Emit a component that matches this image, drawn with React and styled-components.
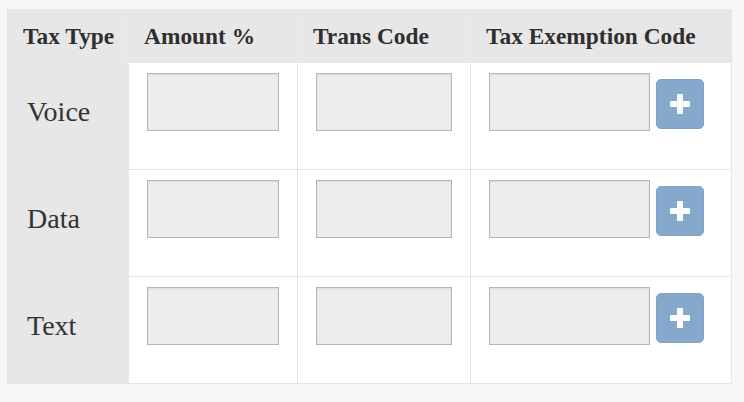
import React from "react";
import styled, { createGlobalStyle } from "styled-components";

const GlobalStyle = createGlobalStyle`
  body {
    margin: 0;
    background: #f7f7f7;
    font-family: "Liberation Serif", "Times New Roman", serif;
    color: #333;
  }
`;

const rows = ["Voice", "Data", "Text"];
const headers = ["Tax Type", "Amount %", "Trans Code", "Tax Exemption Code"];

const Page = styled.div`
  padding: 9px 0 0 7px;
`;

const Sheet = styled.div`
  display: grid;
  grid-template-columns: 121px 169px 173px 262px;
  width: 725px;
`;

const HeadCell = styled.div`
  box-sizing: border-box;
  height: 54px;
  display: flex;
  align-items: center;
  padding: 0 0 0 16px;
  background: #e7e7e7;
  border-right: 1px solid ${(p) => (p.$last ? "#e5e5e5" : "#ebebeb")};
  font-weight: bold;
  font-size: 23.4px;
  color: #2f2f2f;
  white-space: nowrap;
`;

const LabelCell = styled.div`
  box-sizing: border-box;
  height: 107px;
  display: flex;
  align-items: center;
  padding: 0 0 8px 20px;
  background: #e7e7e7;
  border-bottom: 1px solid #e2e2e2;
  font-size: 28px;
`;

const FieldCell = styled.div`
  box-sizing: border-box;
  height: 107px;
  display: flex;
  align-items: flex-start;
  gap: 6px;
  padding: 10px ${(p) => (p.$last ? "27px" : "18px")} 0 18px;
  background: #fff;
  border-left: 1px solid ${(p) => (p.$first ? "#e7e7e7" : "#e5e5e5")};
  border-right: ${(p) => (p.$last ? "1px solid #e5e5e5" : "none")};
  border-bottom: 1px solid #e5e5e5;
`;

const Field = styled.input`
  box-sizing: border-box;
  flex: 1;
  min-width: 0;
  height: 58px;
  margin: 0;
  padding: 6px 10px;
  background: #ededed;
  border: 1px solid #b5b5b5;
  border-radius: 0;
  box-shadow: inset 0 1px 2px rgba(0, 0, 0, 0.08);
  font: inherit;
  font-size: 18px;
  outline: none;
`;

const AddButton = styled.button`
  flex: none;
  width: 48px;
  height: 50px;
  margin-top: 6px;
  padding: 0;
  display: flex;
  align-items: center;
  justify-content: center;
  background: #87a8cd;
  border: 1px solid #80a2c8;
  border-radius: 5px;
  cursor: pointer;
`;

const PlusIcon = () => (
  <svg width="20" height="20" viewBox="0 0 20 20" aria-hidden="true">
    <rect x="7" y="0" width="6" height="20" rx="1" fill="#fff" />
    <rect x="0" y="7" width="20" height="6" rx="1" fill="#fff" />
  </svg>
);

export default function App() {
  return (
    <Page>
      <GlobalStyle />
      <Sheet>
        {headers.map((h, i) => (
          <HeadCell key={h} $last={i === headers.length - 1}>
            {h}
          </HeadCell>
        ))}
        {rows.map((label) => (
          <React.Fragment key={label}>
            <LabelCell>{label}</LabelCell>
            <FieldCell $first>
              <Field type="text" />
            </FieldCell>
            <FieldCell>
              <Field type="text" />
            </FieldCell>
            <FieldCell $last>
              <Field type="text" />
              <AddButton type="button" aria-label={`Add ${label} exemption`}>
                <PlusIcon />
              </AddButton>
            </FieldCell>
          </React.Fragment>
        ))}
      </Sheet>
    </Page>
  );
}
